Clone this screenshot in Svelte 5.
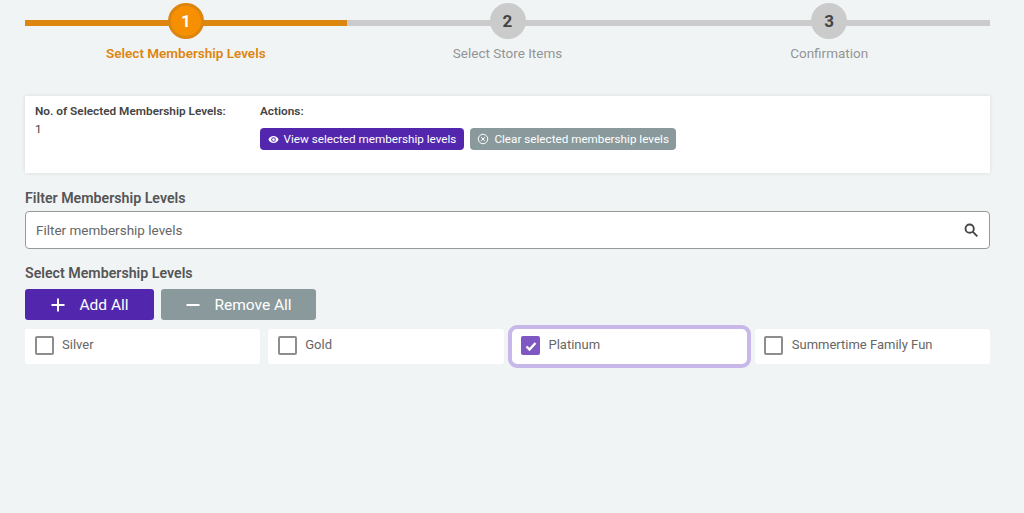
<script>
  let filter = $state('');
  const steps = [
    { n: 1, label: 'Select Membership Levels', active: true },
    { n: 2, label: 'Select Store Items', active: false },
    { n: 3, label: 'Confirmation', active: false }
  ];
  let levels = $state([
    { name: 'Silver', checked: false },
    { name: 'Gold', checked: false },
    { name: 'Platinum', checked: true },
    { name: 'Summertime Family Fun', checked: false }
  ]);
</script>

<div class="page">
  <div class="stepper">
    {#each steps as s}
      <div class="step" class:active={s.active}>
        <div class="track">
          <span class="circle">{s.n}</span>
        </div>
        <div class="label">{s.label}</div>
      </div>
    {/each}
  </div>

  <div class="card">
    <div class="count">
      <div class="head">No. of Selected Membership Levels:</div>
      <div class="value">1</div>
    </div>
    <div class="actions">
      <div class="head">Actions:</div>
      <div class="chips">
        <button class="chip purple">
          <svg width="11" height="11" viewBox="0 0 24 24"><path fill="currentColor" d="M12 4.5C7 4.5 2.7 7.6 1 12c1.7 4.4 6 7.5 11 7.5s9.300-3.100 11-7.500c-1.700-4.400-6-7.500-11-7.500zM12 17a5 5 0 1 1 0-10 5 5 0 0 1 0 10zm0-8a3 3 0 1 0 0 6 3 3 0 0 0 0-6z"/></svg>
          View selected membership levels
        </button>
        <button class="chip grey">
          <svg width="12" height="12" viewBox="0 0 24 24" fill="none" stroke="currentColor" stroke-width="2"><circle cx="12" cy="12" r="9.500"/><path d="M8.500 8.500l7 7M15.500 8.500l-7 7"/></svg>
          Clear selected membership levels
        </button>
      </div>
    </div>
  </div>

  <div class="section-title filter-title">Filter Membership Levels</div>
  <div class="search">
    <input type="text" placeholder="Filter membership levels" bind:value={filter} />
    <svg width="16" height="16" viewBox="0 0 24 24" fill="none" stroke="#444" stroke-width="2.800"><circle cx="10" cy="10" r="6.200"/><path d="M14.500 14.500l7 7"/></svg>
  </div>

  <div class="section-title select-title">Select Membership Levels</div>
  <div class="buttons">
    <button class="big purple">
      <svg width="16" height="16" viewBox="0 0 16 16" stroke="currentColor" stroke-width="2"><path d="M8 1.500v13M1.500 8h13"/></svg>
      Add All
    </button>
    <button class="big grey remove">
      <svg width="16" height="16" viewBox="0 0 16 16" stroke="currentColor" stroke-width="2"><path d="M1.500 8h13"/></svg>
      Remove All
    </button>
  </div>

  <div class="levels">
    {#each levels as l}
      <label class="level" class:checked={l.checked}>
        <input type="checkbox" bind:checked={l.checked} />
        <span class="box">
          {#if l.checked}
            <svg width="14" height="14" viewBox="0 0 14 14" fill="none" stroke="#fff" stroke-width="2.400"><path d="M2.500 7.500l3 3 6-6.500"/></svg>
          {/if}
        </span>
        <span class="name">{l.name}</span>
      </label>
    {/each}
  </div>
</div>

<style>
  :global(body) {
    background: #f1f4f5;
    font-family: Roboto, "Liberation Sans", sans-serif;
  }
  .page {
    box-sizing: border-box;
    height: 513px;
    padding: 3px 34px 0 25px;
    overflow: hidden;
  }
  .stepper {
    display: flex;
    height: 93px;
  }
  .step {
    flex: 1;
    text-align: center;
  }
  .track {
    height: 36px;
    display: flex;
    align-items: center;
    justify-content: center;
    background: linear-gradient(#cbcbcb, #cbcbcb) 0 17px / 100% 6px no-repeat;
  }
  .active .track {
    background-image: linear-gradient(#dc850f, #dc850f);
  }
  .circle {
    box-sizing: border-box;
    width: 36px;
    height: 36px;
    border-radius: 50%;
    background: #cbcbcb;
    color: #444;
    font-size: 17px;
    font-weight: 700;
    line-height: 36px;
  }
  .active .circle {
    background: #f79000;
    border: 3px solid #dc850f;
    color: #fff;
    line-height: 30px;
  }
  .label {
    margin-top: 6px;
    font-size: 13.5px;
    line-height: 17px;
    color: #949494;
  }
  .active .label {
    color: #dc850f;
    font-weight: 600;
  }
  .card {
    box-sizing: border-box;
    height: 77px;
    background: #fff;
    display: flex;
    padding: 7px 10px;
    box-shadow: 0 0 4px rgba(0, 0, 0, 0.1);
    font-size: 11.8px;
    color: #444;
  }
  .head {
    font-weight: 600;
    line-height: 16px;
  }
  .count {
    width: 225px;
  }
  .value {
    margin-top: 2px;
    line-height: 16px;
  }
  .chips {
    display: flex;
    gap: 6px;
    margin-top: 9px;
  }
  button {
    border: none;
    color: #fff;
    font-family: inherit;
    display: flex;
    align-items: center;
    cursor: pointer;
  }
  .purple {
    background: #5227ad;
  }
  .grey {
    background: #8a9a9c;
  }
  .chip {
    height: 22px;
    gap: 5px;
    padding: 0 7.500px;
    border-radius: 4px;
    font-size: 11.7px;
  }
  .section-title {
    font-size: 14.2px;
    font-weight: 600;
    color: #555;
    line-height: 17px;
  }
  .filter-title {
    margin-top: 17px;
  }
  .search {
    box-sizing: border-box;
    margin-top: 4px;
    height: 38px;
    background: #fff;
    border: 1px solid #999;
    border-radius: 4px;
    display: flex;
    align-items: center;
    padding: 0 10px;
  }
  .search input {
    flex: 1;
    border: none;
    outline: none;
    font-family: inherit;
    font-size: 13.5px;
    padding: 0;
  }
  .search input::placeholder {
    color: #666;
    opacity: 1;
  }
  .select-title {
    margin-top: 16px;
  }
  .buttons {
    display: flex;
    gap: 7px;
    margin-top: 7px;
  }
  .big {
    height: 31px;
    width: 129px;
    justify-content: center;
    gap: 13px;
    border-radius: 3px;
    font-size: 15.5px;
  }
  .remove {
    width: 155px;
  }
  .levels {
    display: grid;
    grid-template-columns: repeat(4, 1fr);
    gap: 8px;
    margin-top: 9px;
  }
  .level {
    position: relative;
    box-sizing: border-box;
    height: 35px;
    background: #fff;
    border-radius: 3px;
    display: flex;
    align-items: center;
    padding: 0 0 2px 9.5px;
    gap: 8.5px;
    font-size: 13px;
    color: #666;
  }
  .name {
    margin-bottom: 2px;
  }
  .level input {
    position: absolute;
    opacity: 0;
  }
  .box {
    box-sizing: border-box;
    width: 19px;
    height: 19px;
    border: 2px solid #8d8d8d;
    border-radius: 2px;
    display: flex;
    align-items: center;
    justify-content: center;
  }
  .checked {
    outline: 4px solid #c8b8ea;
    border-radius: 5px;
  }
  .checked .box {
    background: #7e57c2;
    border: none;
  }
</style>
